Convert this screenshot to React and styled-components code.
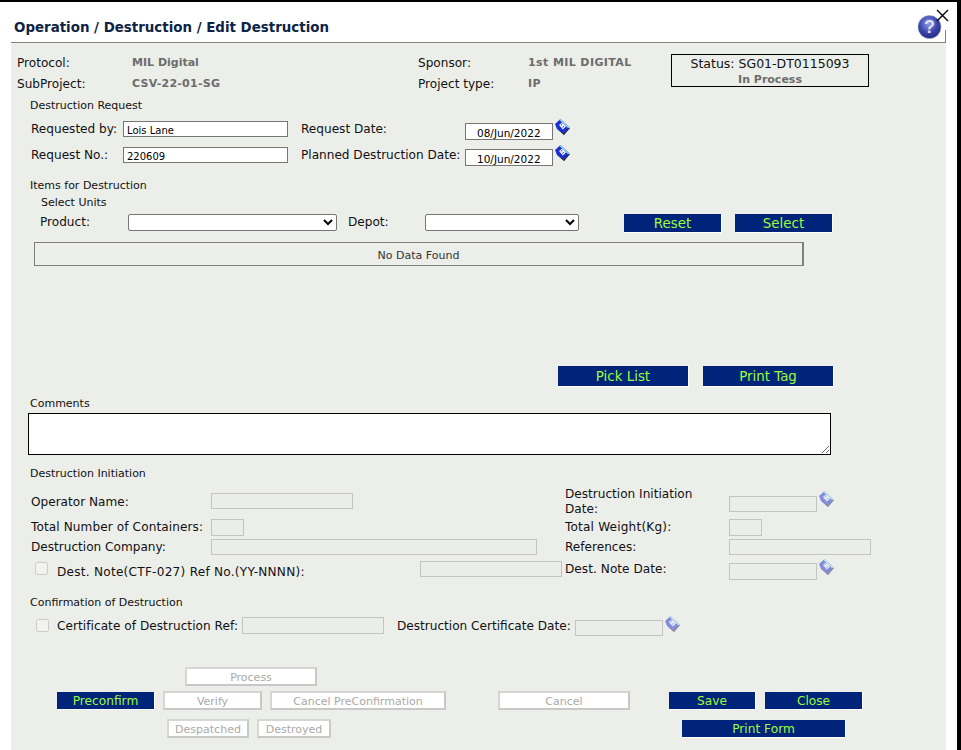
import React from "react";
import styled, { createGlobalStyle } from "styled-components";

const Global = createGlobalStyle`
  html, body { margin: 0; padding: 0; background: #fff; }
  * { box-sizing: border-box; }
`;

const FONT = `"DejaVu Sans", Verdana, sans-serif`;

const Page = styled.div`
  position: relative;
  width: 961px;
  height: 750px;
  overflow: hidden;
  background: #fff;
  border-top: 2px solid #000;
  border-right: 4px solid #000;
  padding-left: 11px;
  font-family: ${FONT};
  font-size: 12px;
  color: #111;
  display: flex;
  flex-direction: column;
`;
const Header = styled.header`
  position: relative;
  flex: none;
  width: 935px;
  height: 41px;
  border-bottom: 1px solid #808080;
  padding-left: 3px;
  padding-right: 4px;
  display: flex;
  justify-content: space-between;
  align-items: flex-start;
  &::after {
    content: "";
    position: absolute;
    right: 0;
    bottom: 0;
    width: 1px;
    height: 12px;
    background: #808080;
  }
`;
const Title = styled.h1`
  margin: 18px 0 0;
  font-size: 13.4px;
  line-height: 16px;
  font-weight: 700;
  color: #0e2345;
`;
const HelpSlot = styled.div`
  margin-top: 13px;
  width: 25px;
  height: 24px;
`;
const CloseMark = styled.svg`
  position: absolute;
  left: 936px;
  top: 7px;
  width: 13px;
  height: 13px;
`;
const Panel = styled.main`
  flex: 1;
  width: 935px;
  background: #eceeea;
  padding-top: 8px;
`;
const InfoBar = styled.section`
  display: flex;
  height: 44px;
  padding-left: 6px;
`;
const InfoGrid = styled.div`
  display: grid;
  grid-template-columns: 115px 286px 110px 143px;
  grid-template-rows: 23px 19px;
  align-items: center;
  width: 654px;
`;
const InfoLabel = styled.span`
  font-size: 12.1px;
`;
const InfoValue = styled.span`
  font-size: 11px;
  font-weight: 700;
  color: #6c6c6c;
  letter-spacing: ${(p) => p.$ls || 0}px;
`;
const StatusBox = styled.div`
  margin-top: 3px;
  width: 198px;
  height: 33px;
  padding-top: 1px;
  border: 1px solid #000;
  text-align: center;
  font-size: 12.5px;
  line-height: 16px;
`;
const StatusValue = styled.div`
  font-size: 11px;
  font-weight: 700;
  color: #6c6c6c;
  line-height: 15px;
`;
const SectionTitle = styled.div`
  padding-top: 1px;
  font-size: 11px;
  line-height: ${(p) => p.$h || 20}px;
  height: ${(p) => p.$h || 20}px;
  margin-top: ${(p) => p.$mt || 0}px;
  margin-bottom: ${(p) => p.$mb || 0}px;
  margin-left: ${(p) => p.$ml || 19}px;
`;
const Row = styled.div`
  display: flex;
  align-items: flex-start;
  height: ${(p) => p.$h}px;
  margin-top: ${(p) => p.$mt || 0}px;
  padding-left: ${(p) => p.$pl || 0}px;
`;
const Label = styled.label`
  flex: none;
  width: ${(p) => p.$w}px;
  margin-left: ${(p) => p.$ml || 0}px;
  margin-top: ${(p) => p.$mt || 0}px;
  font-size: 12.1px;
  letter-spacing: ${(p) => p.$ls || 0}px;
  line-height: ${(p) => p.$lh || 16}px;
`;
const TextInput = styled.input`
  flex: none;
  width: ${(p) => p.$w}px;
  height: ${(p) => p.$h || 16}px;
  margin: ${(p) => p.$mt || 0}px 0 0 ${(p) => p.$ml || 0}px;
  padding: 2px 2px 0 3px;
  font-family: ${FONT};
  font-size: 10px;
  color: #000;
  background: #fff;
  border: 1px solid #767676;
  border-radius: 0;
  outline: none;
  &:disabled {
    background: #ebedea;
    border: 1px solid #c4c4c4;
  }
`;
const DateValue = styled(TextInput)`
  padding-left: 11px;
  font-size: 10.5px;
`;
const CalendarSlot = styled.span`
  flex: none;
  width: 15px;
  height: 16px;
  margin: ${(p) => p.$mt || 0}px 0 0 2px;
  opacity: ${(p) => (p.$off ? 0.5 : 1)};
`;
const Dropdown = styled.select`
  flex: none;
  width: ${(p) => p.$w}px;
  height: 17px;
  margin-left: ${(p) => p.$ml || 0}px;
  font-family: ${FONT};
  font-size: 11px;
  background: #fff;
  border: 1px solid #767676;
  border-radius: 2px;
`;
const Action = styled.button`
  flex: none;
  width: ${(p) => p.$w}px;
  height: ${(p) => p.$h || 19}px;
  margin: ${(p) => p.$mt || 0}px 0 0 ${(p) => p.$ml || 0}px;
  padding: ${(p) => p.$pt || 0}px 0 0;
  font-family: ${FONT};
  font-size: ${(p) => p.$fs || 12.2}px;
  line-height: 1;
  color: #9dfb3d;
  background: #00247a;
  border: 0;
  border-right: 1px solid #fff;
  border-bottom: 1px solid #fff;
  cursor: pointer;
`;
const GhostAction = styled.button`
  flex: none;
  width: ${(p) => p.$w}px;
  height: 19px;
  margin: 0 0 0 ${(p) => p.$ml || 0}px;
  padding: 2px 0 0;
  font-family: ${FONT};
  font-size: 11px;
  line-height: 1;
  color: #a9a9a9;
  background: #fff;
  border: 2px solid #c8c8c8;
  border-top-color: #d6d6d6;
  border-left-color: #d6d6d6;
`;
const EmptyTable = styled.div`
  width: 770px;
  height: 24px;
  margin-left: 23px;
  padding-top: 1px;
  border: 1px solid #808080;
  border-right-width: 2px;
  text-align: center;
  font-size: 11px;
  line-height: 24px;
  color: #333;
`;
const Comments = styled.textarea`
  display: block;
  width: 803px;
  height: 42px;
  margin: 2px 0 0 17px;
  border: 1px solid #000;
  border-radius: 0;
  background: #fff;
  outline: none;
`;
const Check = styled.input.attrs({ type: "checkbox", disabled: true })`
  flex: none;
  width: 13px;
  height: 13px;
  margin: 3px 0 0 ${(p) => p.$ml}px;
`;

const HelpIcon = () => (
  <svg width="25" height="24" viewBox="0 0 25 24">
    <defs>
      <radialGradient id="helpOrb" cx="0.45" cy="0.35" r="0.7">
        <stop offset="0" stopColor="#8f9ae8" />
        <stop offset="0.55" stopColor="#3a46ae" />
        <stop offset="1" stopColor="#1c2478" />
      </radialGradient>
    </defs>
    <circle cx="12.5" cy="12" r="11.5" fill="url(#helpOrb)" stroke="#aab0c8" strokeWidth="0.6" />
    <text x="12.5" y="18" textAnchor="middle" fontFamily="Liberation Sans, sans-serif" fontWeight="700" fontSize="18" fill="#dfe0ea">?</text>
  </svg>
);

const CalendarIcon = () => (
  <svg width="15" height="16" viewBox="0 0 15 16" style={{ display: "block" }}>
    <path d="M0 5 L5.5 0 L15 9 L9 16 L2 10 Z" fill="#1b2fd6" />
    <path d="M5.5 0 L15 9 L13.4 9.6 L4.4 1 Z" fill="#86d6e8" />
    <path d="M2.5 10 L9 14.2 L13.4 9.2 L15 9 L9 16 Z" fill="#333" />
    <path d="M4 6 L7.2 3.4 L11 7.4 L7.8 10.6 Z" fill="#f2f4ff" />
    <path d="M5.8 6.2 L7.4 5 M7.4 8.4 L9 7.2" stroke="#2a3fd8" strokeWidth="1" />
  </svg>
);

const Calendar = ({ mt, off }) => (
  <CalendarSlot $mt={mt} $off={off}><CalendarIcon /></CalendarSlot>
);

export default function App() {
  return (
    <Page>
      <Global />
      <Header>
        <Title>Operation / Destruction / Edit Destruction</Title>
        <HelpSlot><HelpIcon /></HelpSlot>
      </Header>
      <CloseMark viewBox="0 0 13 13">
        <path d="M1 1 L12 12 M12 1 L1 12" stroke="#000" strokeWidth="1.4" fill="none" />
      </CloseMark>
      <Panel>
        <InfoBar>
          <InfoGrid>
            <InfoLabel>Protocol:</InfoLabel>
            <InfoValue>MIL Digital</InfoValue>
            <InfoLabel>Sponsor:</InfoLabel>
            <InfoValue $ls={0.4}>1st MIL DIGITAL</InfoValue>
            <InfoLabel>SubProject:</InfoLabel>
            <InfoValue $ls={0.25}>CSV-22-01-SG</InfoValue>
            <InfoLabel>Project type:</InfoLabel>
            <InfoValue $ls={0.5}>IP</InfoValue>
          </InfoGrid>
          <StatusBox>
            Status: SG01-DT0115093
            <StatusValue>In Process</StatusValue>
          </StatusBox>
        </InfoBar>

        <SectionTitle $mb={6}>Destruction Request</SectionTitle>
        <Row $h={26} $pl={20}>
          <Label $w={92}>Requested by:</Label>
          <TextInput $w={165} defaultValue="Lois Lane" />
          <Label $w={164} $ml={13}>Request Date:</Label>
          <DateValue $w={88} $h={17} $mt={2} defaultValue="08/Jun/2022" />
          <Calendar mt={-2} />
        </Row>
        <Row $h={28} $pl={20}>
          <Label $w={92}>Request No.:</Label>
          <TextInput $w={165} defaultValue="220609" />
          <Label $w={164} $ml={13}>Planned Destruction Date:</Label>
          <DateValue $w={88} $h={17} $mt={2} defaultValue="10/Jun/2022" />
          <Calendar mt={-2} />
        </Row>

        <SectionTitle>Items for Destruction</SectionTitle>
        <SectionTitle $h={14} $ml={30}>Select Units</SectionTitle>
        <Row $h={28} $mt={5} $pl={29}>
          <Label $w={88}>Product:</Label>
          <Dropdown $w={209} />
          <Label $w={77} $ml={11}>Depot:</Label>
          <Dropdown $w={154} />
          <Action $w={98} $ml={45} $fs={13.4} $pt={1}>Reset</Action>
          <Action $w={98} $ml={13} $fs={13.4} $pt={1}>Select</Action>
        </Row>
        <EmptyTable>No Data Found</EmptyTable>

        <Row $h={20} $mt={100} $pl={547}>
          <Action $w={131} $h={21} $fs={13.4} $pt={1}>Pick List</Action>
          <Action $w={131} $h={21} $ml={14} $fs={13.4} $pt={1}>Print Tag</Action>
        </Row>

        <SectionTitle $h={16} $mt={9}>Comments</SectionTitle>
        <Comments />

        <SectionTitle $h={16} $mt={10} $mb={4}>Destruction Initiation</SectionTitle>
        <Row $h={34} $pl={20}>
          <Label $w={180} $mt={9}>Operator Name:</Label>
          <TextInput $w={142} $mt={8} disabled />
          <Label $w={164} $ml={212} $mt={2} $lh={15}>Destruction Initiation<br />Date:</Label>
          <TextInput $w={88} $mt={11} disabled />
          <Calendar mt={6} off />
        </Row>
        <Row $h={20} $pl={20}>
          <Label $w={180} $ls={0.1}>Total Number of Containers:</Label>
          <TextInput $w={33} $h={17} disabled />
          <Label $w={164} $ml={321} $ls={0.18}>Total Weight(Kg):</Label>
          <TextInput $w={33} $h={17} disabled />
        </Row>
        <Row $h={20} $pl={20}>
          <Label $w={180}>Destruction Company:</Label>
          <TextInput $w={326} disabled />
          <Label $w={164} $ml={28}>References:</Label>
          <TextInput $w={142} disabled />
        </Row>
        <Row $h={35}>
          <Check $ml={24} />
          <Label $w={363} $ml={9} $mt={5} $ls={0.25}>Dest. Note(CTF-027) Ref No.(YY-NNNN):</Label>
          <TextInput $w={142} $mt={2} disabled />
          <Label $w={164} $ml={3} $mt={2} $ls={0.05}>Dest. Note Date:</Label>
          <TextInput $w={88} $h={17} $mt={4} disabled />
          <Calendar off />
        </Row>

        <SectionTitle $h={16} $mb={6}>Confirmation of Destruction</SectionTitle>
        <Row $h={51}>
          <Check $ml={25} />
          <Label $w={185} $ml={8} $mt={2} $ls={0.05}>Certificate of Destruction Ref:</Label>
          <TextInput $w={142} $h={17} $mt={1} disabled />
          <Label $w={178} $ml={13} $mt={2}>Destruction Certificate Date:</Label>
          <TextInput $w={88} $mt={4} disabled />
          <Calendar off />
        </Row>

        <Row $h={24} $pl={174}>
          <GhostAction $w={132}>Process</GhostAction>
        </Row>
        <Row $h={28} $pl={46}>
          <Action $w={98} $mt={1} $h={18} $pt={1}>Preconfirm</Action>
          <GhostAction $w={99} $ml={8}>Verify</GhostAction>
          <GhostAction $w={176} $ml={8}>Cancel PreConfirmation</GhostAction>
          <GhostAction $w={132} $ml={52}>Cancel</GhostAction>
          <Action $w={87} $mt={1} $ml={39} $h={18} $pt={1}>Save</Action>
          <Action $w={98} $mt={1} $ml={9} $h={18} $pt={1}>Close</Action>
        </Row>
        <Row $h={20} $pl={156}>
          <GhostAction $w={82}>Despatched</GhostAction>
          <GhostAction $w={74} $ml={8}>Destroyed</GhostAction>
          <Action $w={164} $mt={1} $ml={351} $h={18} $pt={1}>Print Form</Action>
        </Row>
      </Panel>
    </Page>
  );
}
